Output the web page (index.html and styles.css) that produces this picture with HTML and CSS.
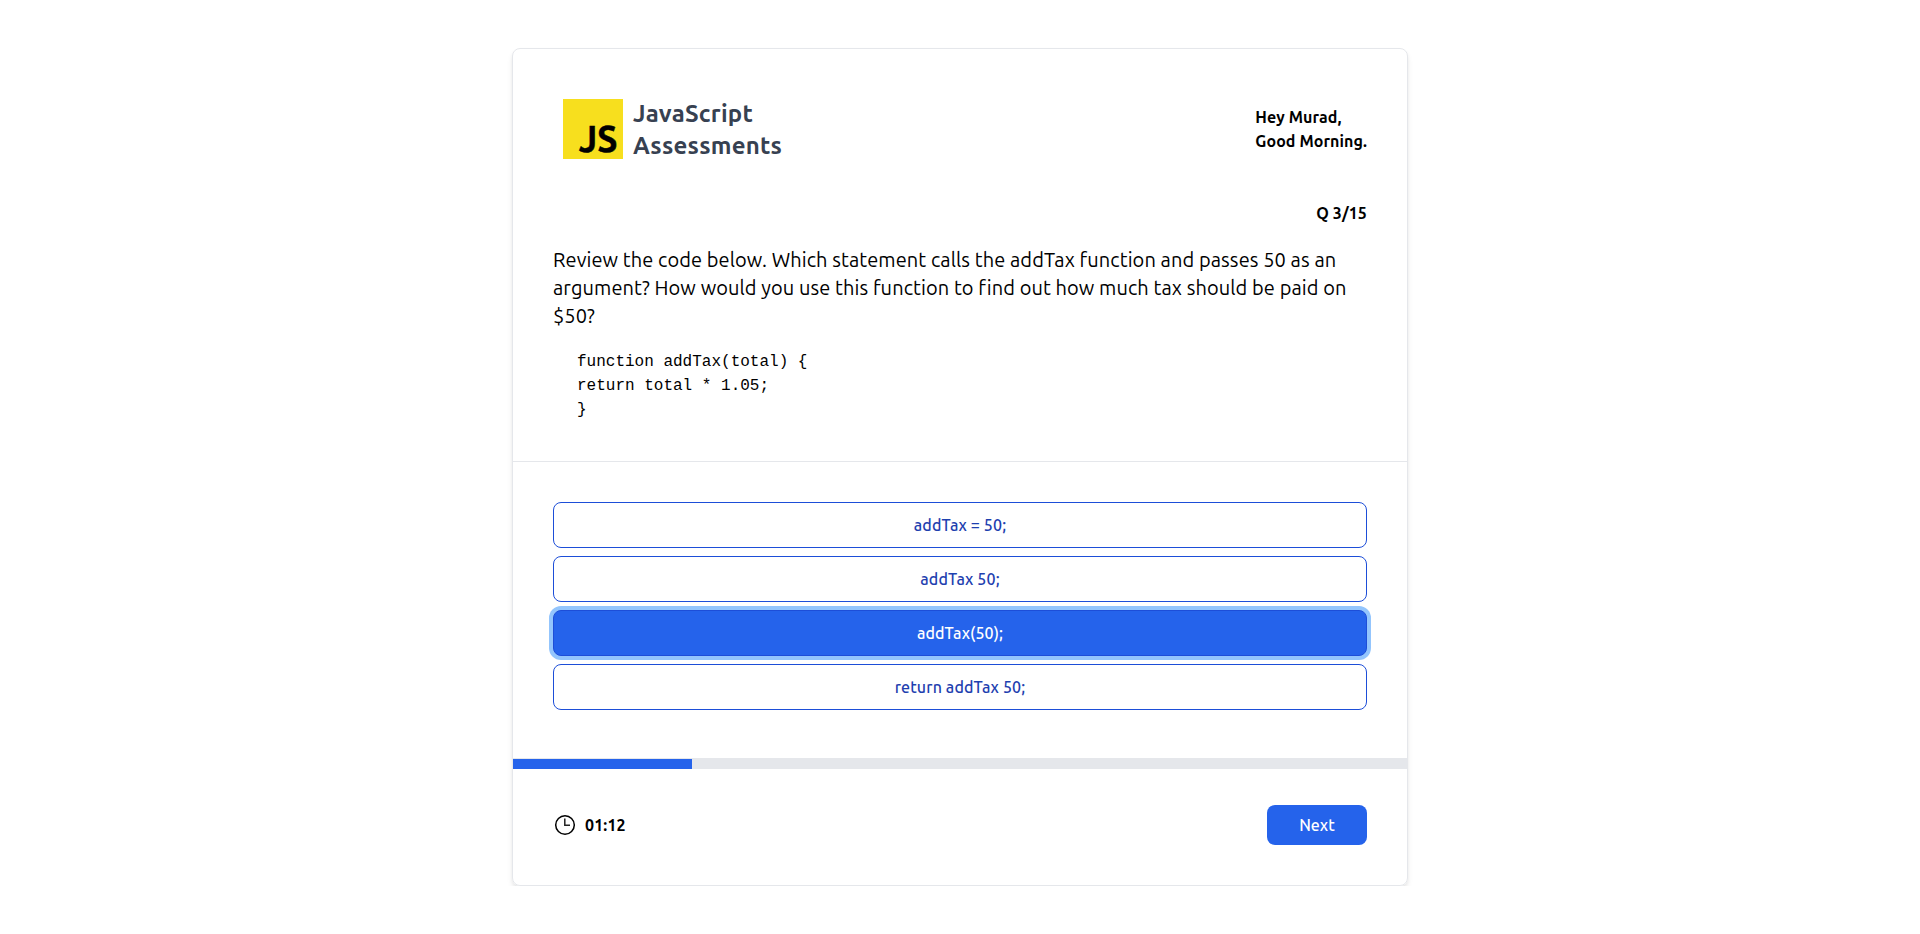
FILE: index.html
```html
<!DOCTYPE html>
<html lang="en">
<head>
<meta charset="utf-8">
<title>JavaScript Assessments</title>
<link rel="stylesheet" href="styles.css">
</head>
<body>
<main class="card">
  <section class="question">
    <header class="header">
      <div class="brand">
        <svg class="logo" viewBox="0 0 60 60" role="img" aria-label="JavaScript">
          <rect width="60" height="60" fill="#f7df1e"/>
          <text class="logo-text" x="15.8" y="52.6" textLength="38.6" lengthAdjust="spacingAndGlyphs">JS</text>
        </svg>
        <h1 class="title"><span>JavaScript</span><span>Assessments</span></h1>
      </div>
      <p class="greeting"><span>Hey Murad,</span><span>Good Morning.</span></p>
    </header>
    <p class="counter">Q 3/15</p>
    <p class="prompt">Review the code below. Which statement calls the addTax function and passes 50 as an argument? How would you use this function to find out how much tax should be paid on $50?</p>
    <pre class="code">function addTax(total) {
return total * 1.05;
}</pre>
  </section>
  <section class="answers">
    <button class="answer">addTax = 50;</button>
    <button class="answer">addTax 50;</button>
    <button class="answer selected">addTax(50);</button>
    <button class="answer">return addTax 50;</button>
  </section>
  <div class="progress"><div class="progress-fill" style="width: 20%"></div></div>
  <footer class="footer">
    <div class="timer">
      <svg class="clock" viewBox="0 0 24 24" fill="none" stroke="#000">
        <circle cx="12" cy="12" r="9.3" stroke-width="1.5"/>
        <path d="M11.8 5.6V12.3H17" stroke-width="1.5" stroke="#222"/>
      </svg>
      <span class="time">01:12</span>
    </div>
    <button class="next">Next</button>
  </footer>
</main>
</body>
</html>
```
FILE: styles.css
```css
* {
  box-sizing: border-box;
}

body {
  margin: 0;
  padding-top: 48px;
  background: #fff;
  color: #000;
  font: 16px/24px Ubuntu, "Open Sans", "Noto Sans", sans-serif;
}

h1, p, pre {
  margin: 0;
}

button {
  font: inherit;
  font-weight: 500;
  border-radius: 8px;
}

.card {
  width: 896px;
  height: 838px;
  margin: 0 auto;
  border: 1px solid #e5e7eb;
  border-radius: 8px;
  box-shadow: 0 4px 6px -1px rgba(0, 0, 0, 0.1), 0 2px 4px -1px rgba(0, 0, 0, 0.06);
}

.question {
  padding: 40px 40px 39px;
  border-bottom: 1px solid #e5e7eb;
}

.header {
  display: flex;
  justify-content: space-between;
  align-items: center;
  height: 80px;
}

.brand {
  display: flex;
  align-items: center;
  gap: 10px;
  padding-left: 10px;
}

.logo {
  width: 60px;
  height: 60px;
}

.logo-text {
  font: 700 37px Ubuntu, Lato, sans-serif;
  stroke: #000;
  stroke-width: 0.5px;
}

.title {
  display: flex;
  flex-direction: column;
  padding-top: 2px;
  color: #374151;
  font-size: 24px;
  line-height: 32px;
  font-weight: 700;
  letter-spacing: 0.24px;
}

.greeting {
  display: flex;
  flex-direction: column;
  font-weight: 700;
  letter-spacing: 0.08px;
}

.counter {
  margin-top: 32px;
  text-align: right;
  font-weight: 700;
  letter-spacing: 0.1px;
}

.prompt {
  margin-top: 21px;
  font-size: 20px;
  line-height: 28px;
  letter-spacing: 0.09px;
}

.code {
  margin: 20px 0 0 24px;
  font: 16px/24px "Liberation Mono", monospace;
}

.answers {
  display: flex;
  flex-direction: column;
  gap: 8px;
  padding: 40px 40px 48px;
}

.answer {
  height: 46px;
  border: 1px solid #1d4ed8;
  background: #fff;
  color: #1e40af;
  letter-spacing: 0.12px;
}

.selected {
  background: #2563eb;
  color: #fff;
  box-shadow: 0 0 0 4px #93c5fd;
}

.progress {
  height: 11px;
  padding-top: 1px;
  background: #e5e7eb;
}

.progress-fill {
  height: 10px;
  background: #2563eb;
}

.footer {
  display: flex;
  justify-content: space-between;
  align-items: center;
  padding: 36px 40px 40px;
}

.timer {
  display: flex;
  align-items: center;
  gap: 8px;
}

.clock {
  width: 24px;
  height: 24px;
}

.time {
  font-weight: 700;
  letter-spacing: 0.15px;
}

.next {
  width: 100px;
  height: 40px;
  border: 0;
  background: #2563eb;
  color: #fff;
}
```
